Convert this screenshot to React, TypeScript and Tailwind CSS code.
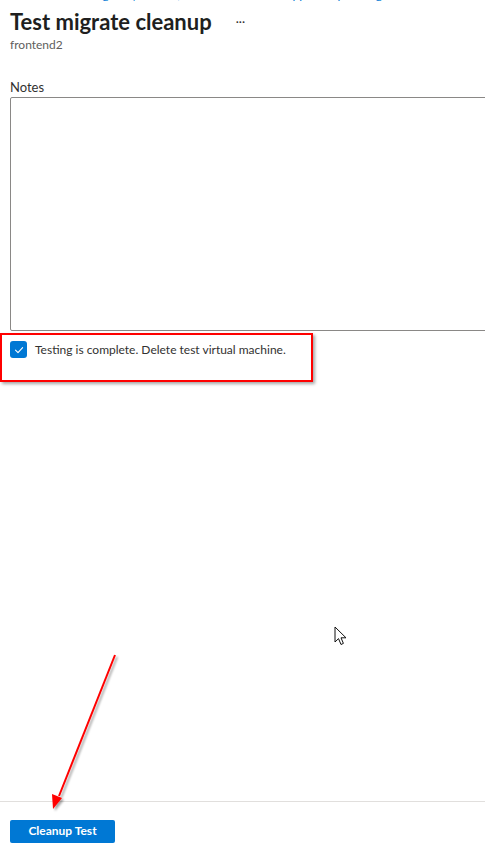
import React from 'react';

const font = { fontFamily: '"Segoe UI", Lato, "Open Sans", sans-serif' };

function Check() {
  return (
    <svg width="12" height="12" viewBox="0 0 12 12" fill="none">
      <path d="M2.5 6.2 L5 8.6 L9.6 3.6" stroke="white" strokeWidth="1.1" strokeLinecap="round" strokeLinejoin="round" />
    </svg>
  );
}

function Arrow() {
  return (
    <svg className="pointer-events-none absolute left-0 top-0" width="485" height="855">
      <defs>
        <filter id="sh" x="-20%" y="-20%" width="140%" height="140%">
          <feDropShadow dx="2" dy="2" stdDeviation="1.2" floodColor="#000" floodOpacity="0.35" />
        </filter>
      </defs>
      <g filter="url(#sh)">
        <line x1="115" y1="655" x2="59" y2="796" stroke="#ff0000" strokeWidth="2" />
        <polygon points="53,809 52,794 62,798" fill="#ff0000" />
      </g>
    </svg>
  );
}

function Cursor() {
  return (
    <svg className="pointer-events-none absolute left-[334px] top-[626px]" width="16" height="22" viewBox="0 0 16 22">
      <path
        d="M1 1 L1 16 L4.5 12.6 L7 18.5 L9.4 17.4 L7 11.8 L12 11.8 Z"
        fill="white"
        stroke="#111"
        strokeWidth="1"
        strokeLinejoin="round"
      />
    </svg>
  );
}

export default function App() {
  return (
    <div className="relative flex h-[855px] w-[485px] flex-col overflow-hidden bg-white" style={font}>
      <div className="h-[3px] overflow-hidden">
        <div className="-mt-[13px] whitespace-nowrap pl-[10px] text-[12px] leading-[16px] text-[#0078d4]">
          Home &gt; Azure Migrate | Servers, databases and web apps &gt; Replicating machines &gt; frontend2
        </div>
      </div>

      <div className="flex items-center px-[10px] pt-[4px]">
        <h1 className="text-[22px] font-bold leading-[30px] text-[#201f1e]">Test migrate cleanup</h1>
        <span className="ml-[24px] text-[12px] leading-[30px] text-[#323130]">···</span>
      </div>
      <div className="px-[10px] text-[12px] leading-[15px] text-[#605e5c]">frontend2</div>

      <div className="mt-[27px] pl-[10px]">
        <label className="block text-[13px] leading-[17px] text-[#323130]">Notes</label>
        <div className="mt-[1px] h-[234px] w-[480px] rounded-[2px] border border-[#8a8886] bg-white" />
      </div>

      <div className="mt-[2px] h-[49px] w-[313px] border-2 border-[#ff0000] pl-[8px] pt-[6px] shadow-[2px_2px_3px_rgba(0,0,0,0.35)]">
        <div className="flex items-center gap-[8px]">
          <span className="flex h-[17px] w-[17px] items-center justify-center rounded-[3px] bg-[#0078d4]">
            <Check />
          </span>
          <span className="whitespace-nowrap text-[12px] leading-[17px] text-[#323130]">
            Testing is complete. Delete test virtual machine.
          </span>
        </div>
      </div>

      <div className="flex-1" />

      <div className="h-[54px] border-t border-[#e1dfdd] px-[10px] pt-[15px]">
        <button className="h-[23px] w-[105px] rounded-[2px] bg-[#0078d4] text-[12px] font-bold text-white">
          Cleanup Test
        </button>
      </div>

      <Arrow />
      <Cursor />
    </div>
  );
}
